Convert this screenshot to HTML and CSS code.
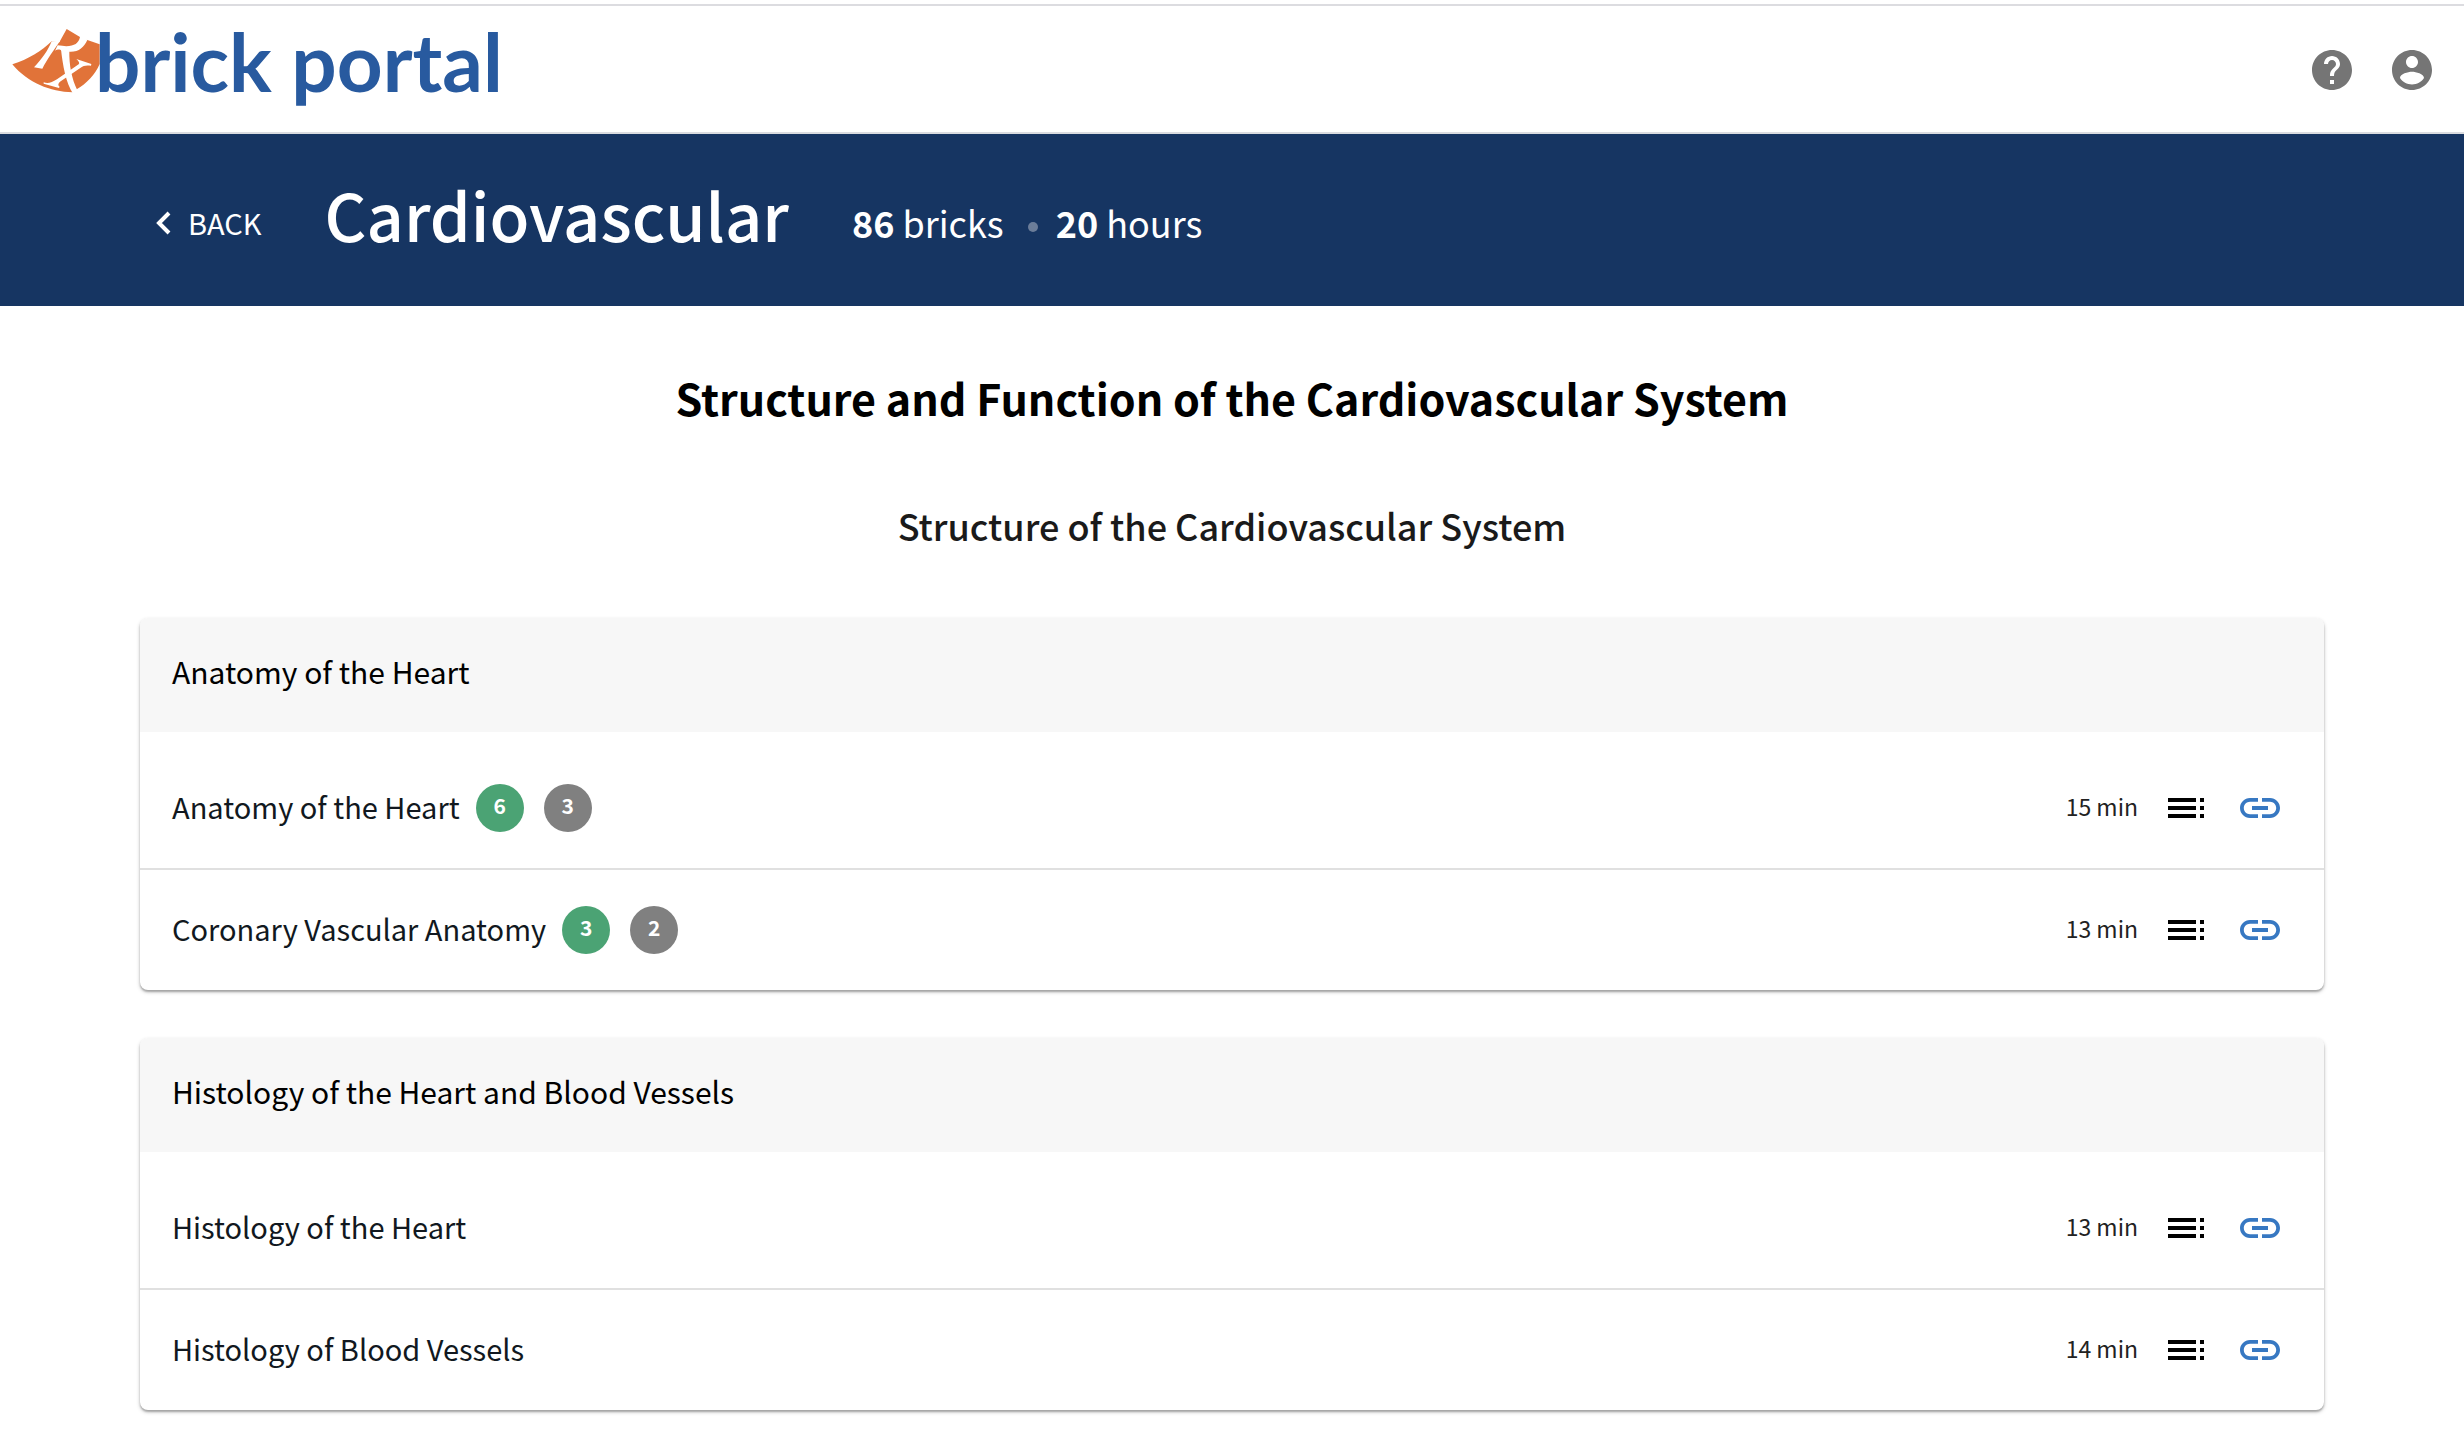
FILE: index.html
```html
<!DOCTYPE html>
<html lang="en">
<head>
<meta charset="utf-8">
<meta name="viewport" content="width=device-width, initial-scale=1">
<title>Cardiovascular - brick portal</title>
<link rel="stylesheet" href="styles.css">
</head>
<body>
<svg class="sprite" aria-hidden="true">
  <symbol id="icon-toc" viewBox="0 0 24 24"><path d="M3 9h14V7H3v2zm0 4h14v-2H3v2zm0 4h14v-2H3v2zm16 0h2v-2h-2v2zm0-10v2h2V7h-2zm0 6h2v-2h-2v2z"/></symbol>
  <symbol id="icon-link" viewBox="0 0 24 24"><path d="M3.9 12c0-1.71 1.39-3.1 3.1-3.1h4V7H7c-2.76 0-5 2.24-5 5s2.24 5 5 5h4v-1.900H7c-1.710 0-3.100-1.390-3.100-3.100zM8 13h8v-2H8v2zm9-6h-4v1.900h4c1.710 0 3.100 1.390 3.100 3.100s-1.390 3.100-3.100 3.100h-4V17h4c2.760 0 5-2.240 5-5s-2.240-5-5-5z"/></symbol>
</svg>

<header class="topbar">
  <a class="logo" href="#" aria-label="Rx brick portal">
    <svg class="logo-mark" viewBox="36 40 264 196" aria-hidden="true">
      <path fill="#e17339" d="M37 148C85 133 125 108 155 79L178 82 200 42 240 66 262 75 299 88V147C285 180 260 205 230 223L218 232C150 230 85 205 37 148Z"/>
      <g fill="#fff">
        <path d="M155 79 180 78C165 100 140 135 127 161L102 157C125 133 145 105 155 79Z"/>
        <path d="M240 66C235 90 215 98 173 91L165 107C175 102 180 103 185 108L207 110C235 112 252 98 262 75L252 60Z"/>
        <path d="M183 103 208 107C207 150 215 190 232 226L219 236C198 205 188 150 183 103Z"/>
        <path d="M131 202C145 207 155 202 171 193L236 148C240 144 236 138 229 132L274 147 273 152C258 150 250 152 242 158L182 199C174 205 173 212 179 215L177 219 131 206Z"/>
      </g>
    </svg>
    <span class="logo-text">brick portal</span>
  </a>
  <nav class="topbar-actions" aria-label="Account">
    <button class="icon-button" type="button" aria-label="Help">
      <svg class="icon" viewBox="0 0 24 24"><path d="M12 2C6.480 2 2 6.480 2 12s4.480 10 10 10 10-4.480 10-10S17.520 2 12 2zm1 17h-2v-2h2v2zm2.070-7.750l-.9.920C13.450 12.900 13 13.500 13 15h-2v-.5c0-1.100.450-2.100 1.170-2.830l1.240-1.260c.370-.360.590-.860.590-1.410 0-1.100-.9-2-2-2s-2 .9-2 2H8c0-2.210 1.790-4 4-4s4 1.790 4 4c0 .880-.360 1.680-.930 2.250z"/></svg>
    </button>
    <button class="icon-button" type="button" aria-label="Account">
      <svg class="icon" viewBox="0 0 24 24"><path d="M12 2C6.480 2 2 6.480 2 12s4.480 10 10 10 10-4.480 10-10S17.520 2 12 2zm0 3c1.660 0 3 1.340 3 3s-1.340 3-3 3-3-1.340-3-3 1.340-3 3-3zm0 14.200c-2.500 0-4.710-1.280-6-3.220.030-1.990 4-3.080 6-3.080 1.990 0 5.970 1.090 6 3.080-1.290 1.940-3.500 3.220-6 3.220z"/></svg>
    </button>
  </nav>
</header>

<section class="banner">
  <a class="back" href="#"><svg class="chevron" viewBox="0 0 16 24" aria-hidden="true"><path d="M13 2 3 12 13 22"/></svg>BACK</a>
  <h1 class="banner-title">Cardiovascular</h1>
  <p class="stats"><span><b>86</b> bricks</span><i class="dot"></i><span><b>20</b> hours</span></p>
</section>

<main class="content">
  <h2 class="section-title">Structure and Function of the Cardiovascular System</h2>
  <h3 class="section-subtitle">Structure of the Cardiovascular System</h3>

  <section class="card">
    <h4 class="card-title">Anatomy of the Heart</h4>
    <ul class="bricks">
      <li class="brick">
        <a class="brick-name" href="#">Anatomy of the Heart</a>
        <span class="badges"><span class="badge badge-green">6</span><span class="badge">3</span></span>
        <span class="duration">15 min</span>
        <button class="icon-button toc" type="button" aria-label="Contents"><svg class="icon"><use href="#icon-toc"/></svg></button>
        <button class="icon-button link" type="button" aria-label="Copy link"><svg class="icon"><use href="#icon-link"/></svg></button>
      </li>
      <li class="brick">
        <a class="brick-name" href="#">Coronary Vascular Anatomy</a>
        <span class="badges"><span class="badge badge-green">3</span><span class="badge">2</span></span>
        <span class="duration">13 min</span>
        <button class="icon-button toc" type="button" aria-label="Contents"><svg class="icon"><use href="#icon-toc"/></svg></button>
        <button class="icon-button link" type="button" aria-label="Copy link"><svg class="icon"><use href="#icon-link"/></svg></button>
      </li>
    </ul>
  </section>

  <section class="card">
    <h4 class="card-title">Histology of the Heart and Blood Vessels</h4>
    <ul class="bricks">
      <li class="brick">
        <a class="brick-name" href="#">Histology of the Heart</a>
        <span class="duration">13 min</span>
        <button class="icon-button toc" type="button" aria-label="Contents"><svg class="icon"><use href="#icon-toc"/></svg></button>
        <button class="icon-button link" type="button" aria-label="Copy link"><svg class="icon"><use href="#icon-link"/></svg></button>
      </li>
      <li class="brick">
        <a class="brick-name" href="#">Histology of Blood Vessels</a>
        <span class="duration">14 min</span>
        <button class="icon-button toc" type="button" aria-label="Contents"><svg class="icon"><use href="#icon-toc"/></svg></button>
        <button class="icon-button link" type="button" aria-label="Copy link"><svg class="icon"><use href="#icon-link"/></svg></button>
      </li>
    </ul>
  </section>
</main>
</body>
</html>
```
FILE: styles.css
```css
*, *::before, *::after { box-sizing: border-box; }

body {
  margin: 0;
  padding-top: 4px;
  background: #fff;
  color: #000;
  font-family: "Noto Sans CJK SC", "Noto Sans", sans-serif;
}

h1, h2, h3, h4, p, ul { margin: 0; padding: 0; }
ul { list-style: none; }
a { color: inherit; text-decoration: none; }
.sprite { display: none; }

.icon-button {
  display: flex;
  padding: 0;
  border: 0;
  background: none;
  color: #757575;
  cursor: pointer;
}
.icon { width: 48px; height: 48px; fill: currentColor; }

/* Top bar */
.topbar {
  display: flex;
  justify-content: space-between;
  align-items: center;
  height: 130px;
  padding: 2px 28px 0 12px;
  border-top: 2px solid #dcdce0;
  border-bottom: 2px solid #dadce0;
}
.logo { display: flex; align-items: center; padding-bottom: 18px; }
.logo-mark { width: 88px; height: 66px; }
.logo-text {
  margin-left: -5px;
  color: #285a9f;
  font: bold 80px/96px Lato, sans-serif;
}
.topbar-actions { display: flex; gap: 32px; }

/* Banner */
.banner {
  display: flex;
  align-items: center;
  height: 172px;
  padding: 0 156px;
  background: #163562;
  color: #fff;
}
.back { display: flex; align-items: center; gap: 16px; padding-top: 3px; font-size: 29px; }
.chevron { width: 16px; height: 24px; margin-top: 2px; fill: none; stroke: #fff; stroke-width: 4; }
.banner-title { margin-left: 63px; padding-bottom: 12px; font-size: 65px; font-weight: 500; }
.stats { display: flex; align-items: center; margin-left: 63px; padding-top: 4px; font-size: 36px; }
.dot { width: 10px; height: 10px; margin: 10px 18px 0 24px; border-radius: 50%; background: #6b7d99; }

/* Content */
.content { padding: 61px 140px 0; }
.section-title { font-size: 43px; line-height: 60px; font-weight: 700; text-align: center; }
.section-subtitle {
  margin: 68px 0 63px;
  color: #1a1a1a;
  font-size: 36px;
  line-height: 60px;
  font-weight: 500;
  text-align: center;
}

.card {
  margin-bottom: 48px;
  border-radius: 8px;
  background: #fff;
  box-shadow: 0 2px 2px rgba(0, 0, 0, .24), 0 2px 4px rgba(0, 0, 0, .2);
}
.card-title {
  padding: 23px 32px 31px;
  border-radius: 8px 8px 0 0;
  background: #f7f7f7;
  font-size: 30px;
  line-height: 60px;
  font-weight: 400;
}
.bricks { padding-top: 16px; }
.brick { display: flex; align-items: center; height: 120px; padding: 0 40px 0 32px; }
.brick + .brick { height: 122px; border-top: 2px solid #e0e0e0; }
.brick-name { padding-bottom: 4px; color: #111820; font-size: 29px; }
.badges { display: flex; gap: 20px; margin-left: 16px; }
.badge {
  width: 48px;
  height: 48px;
  border-radius: 50%;
  background: #808080;
  color: #fff;
  font-size: 21px;
  line-height: 43px;
  font-weight: 700;
  text-align: center;
}
.badge-green { background: #4ba374; }
.duration { margin-left: auto; padding-bottom: 4px; color: #222; font-size: 23px; }
.toc { margin-left: 24px; color: #000; }
.link { margin-left: 26px; color: #3778c2; }
```
